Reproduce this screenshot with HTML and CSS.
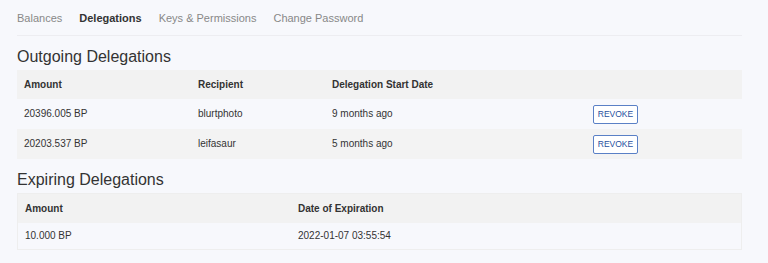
FILE: index.html
```html
<!DOCTYPE html>
<html lang="en">
<head>
    <meta charset="UTF-8">
    <meta name="viewport" content="width=device-width, initial-scale=1.0">
    <title>Delegations</title>
    <link rel="stylesheet" href="styles.css">
</head>
<body>
    <div class="wallet">
        <nav class="tabs">
            <a href="#">Balances</a>
            <a href="#" class="active">Delegations</a>
            <a href="#">Keys &amp; Permissions</a>
            <a href="#">Change Password</a>
        </nav>

        <h2>Outgoing Delegations</h2>
        <table class="delegations outgoing">
            <thead>
                <tr>
                    <th class="col-amount">Amount</th>
                    <th class="col-recipient">Recipient</th>
                    <th class="col-date">Delegation Start Date</th>
                    <th class="col-action"></th>
                </tr>
            </thead>
            <tbody>
                <tr>
                    <td>20396.005 BP</td>
                    <td>blurtphoto</td>
                    <td>9 months ago</td>
                    <td><button class="revoke">REVOKE</button></td>
                </tr>
                <tr>
                    <td>20203.537 BP</td>
                    <td>leifasaur</td>
                    <td>5 months ago</td>
                    <td><button class="revoke">REVOKE</button></td>
                </tr>
            </tbody>
        </table>

        <h2>Expiring Delegations</h2>
        <table class="delegations expiring">
            <thead>
                <tr>
                    <th class="col-exp-amount">Amount</th>
                    <th>Date of Expiration</th>
                </tr>
            </thead>
            <tbody>
                <tr>
                    <td>10.000 BP</td>
                    <td>2022-01-07 03:55:54</td>
                </tr>
            </tbody>
        </table>
    </div>
</body>
</html>
```

FILE: styles.css
```css
body {
    margin: 0;
    background-color: #f7f8fc;
    color: #333333;
    font-family: 'Liberation Sans', Arial, sans-serif;
}

.wallet {
    width: 725px;
    margin-left: 17px;
}

.tabs {
    display: flex;
    gap: 17px;
    padding: 10px 0 9px;
    border-bottom: 1px solid #ededf1;
    font-size: 11px;
    line-height: 16px;
}

.tabs a {
    color: #888888;
    text-decoration: none;
}

.tabs a.active {
    color: #333333;
    font-weight: bold;
}

h2 {
    margin: 11px 0 3px;
    font-size: 16px;
    font-weight: normal;
    line-height: 20px;
    color: #333333;
}

.delegations {
    width: 100%;
    border-collapse: collapse;
    table-layout: fixed;
    font-size: 10px;
}

.delegations th {
    background-color: #f2f2f2;
    text-align: left;
    font-weight: bold;
    padding: 8px 7px;
    line-height: 13px;
}

.delegations td {
    padding: 5px 7px;
    line-height: 20px;
}

.outgoing tbody tr:nth-child(even) td {
    background-color: #f3f3f3;
}

/* widths are content widths, cell padding (14px) comes on top */
.col-amount { width: 160px; }
.col-recipient { width: 120px; }
.col-date { width: 247px; }
.col-exp-amount { width: 259px; }

.expiring {
    border: 1px solid #eeeeee;
}

.expiring td {
    padding: 3px 7px;
}

.revoke {
    display: block;
    width: 45px;
    height: 19px;
    padding: 0;
    background-color: #ffffff;
    border: 1px solid #5a80c6;
    border-radius: 2px;
    color: #1f4f9e;
    font-family: 'Liberation Sans', Arial, sans-serif;
    font-size: 8.5px;
    cursor: pointer;
}
```
